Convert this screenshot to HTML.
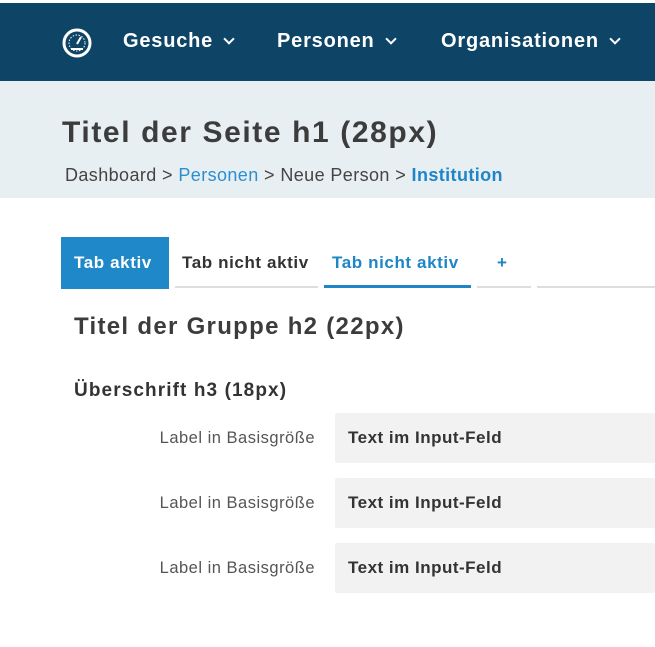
<!DOCTYPE html>
<html><head><meta charset="utf-8"><style>
*{margin:0;padding:0;box-sizing:border-box}
body{width:655px;height:647px;background:#fff;font-family:"Liberation Sans",sans-serif;position:relative;overflow:hidden;color:#3a3a3a}
.a{position:absolute;white-space:nowrap}
.nav{left:0;top:3px;width:655px;height:78px;background:#0e4566}
.nv{color:#fff;font-weight:bold;font-size:20px;top:30px;letter-spacing:0.8px}
.chev{display:inline-block;width:8px;height:8px;border-right:2px solid #fff;border-bottom:2px solid #fff;transform:rotate(45deg);margin-left:12px;position:relative;top:-4px}
.hdr{left:0;top:81px;width:655px;height:117px;background:#e8eff2}
.lbl{font-size:16.5px;color:#555;right:340px;letter-spacing:0.5px}
.inp{left:335px;width:320px;height:50px;background:#f2f2f2;border-radius:2px}
.it{left:348px;font-size:17px;font-weight:bold;color:#333;letter-spacing:0.5px}
.tb{font-size:17px;font-weight:bold;letter-spacing:0.6px;top:253px}
</style></head><body>
<div class="a nav"></div>
<svg class="a" style="left:62px;top:28px" width="30" height="30" viewBox="0 0 30 30"><circle cx="15" cy="15" r="13" fill="none" stroke="#fff" stroke-width="3"/><circle cx="15" cy="15" r="8" fill="none" stroke="#fff" stroke-width="1" stroke-dasharray="1.5 1.5"/><path d="M15 16 L19 9" stroke="#fff" stroke-width="2"/><path d="M9 21 H21" stroke="#fff" stroke-width="2"/></svg>
<div class="a nv" style="left:123px">Gesuche<span class="chev"></span></div>
<div class="a nv" style="left:277px">Personen<span class="chev"></span></div>
<div class="a nv" style="left:441px">Organisationen<span class="chev"></span></div>
<div class="a hdr"></div>
<div class="a" style="left:62px;top:116px;font-size:30px;font-weight:bold;color:#3c3c3c;letter-spacing:1.6px">Titel der Seite h1 (28px)</div>
<div class="a" style="left:65px;top:165px;font-size:18px;color:#444;letter-spacing:0.4px">Dashboard &gt; <span style="color:#2b8fcf">Personen</span> &gt; Neue Person &gt; <b style="color:#1e86c6">Institution</b></div>
<div class="a" style="left:61px;top:237px;width:108px;height:52px;background:#1e88c8"></div>
<div class="a tb" style="left:74px;color:#fff">Tab aktiv</div>
<div class="a tb" style="left:182px;color:#333">Tab nicht aktiv</div>
<div class="a tb" style="left:332px;color:#1e86c6">Tab nicht aktiv</div>
<div class="a tb" style="left:497px;color:#1e86c6">+</div>
<div class="a" style="left:175px;top:286px;width:143px;height:2px;background:#ddd"></div>
<div class="a" style="left:324px;top:285px;width:147px;height:3px;background:#1e86c6"></div>
<div class="a" style="left:477px;top:286px;width:54px;height:2px;background:#ddd"></div>
<div class="a" style="left:537px;top:286px;width:118px;height:2px;background:#ddd"></div>
<div class="a" style="left:74px;top:313px;font-size:24px;font-weight:bold;color:#3c3c3c;letter-spacing:1.3px">Titel der Gruppe h2 (22px)</div>
<div class="a" style="left:74px;top:380px;font-size:19px;font-weight:bold;color:#333;letter-spacing:1.1px">Überschrift h3 (18px)</div>
<div class="a inp" style="top:413px"></div><div class="a inp" style="top:478px"></div><div class="a inp" style="top:543px"></div>
<div class="a lbl" style="top:429px">Label in Basisgröße</div>
<div class="a lbl" style="top:494px">Label in Basisgröße</div>
<div class="a lbl" style="top:559px">Label in Basisgröße</div>
<div class="a it" style="top:428px">Text im Input-Feld</div>
<div class="a it" style="top:493px">Text im Input-Feld</div>
<div class="a it" style="top:558px">Text im Input-Feld</div>
</body></html>
